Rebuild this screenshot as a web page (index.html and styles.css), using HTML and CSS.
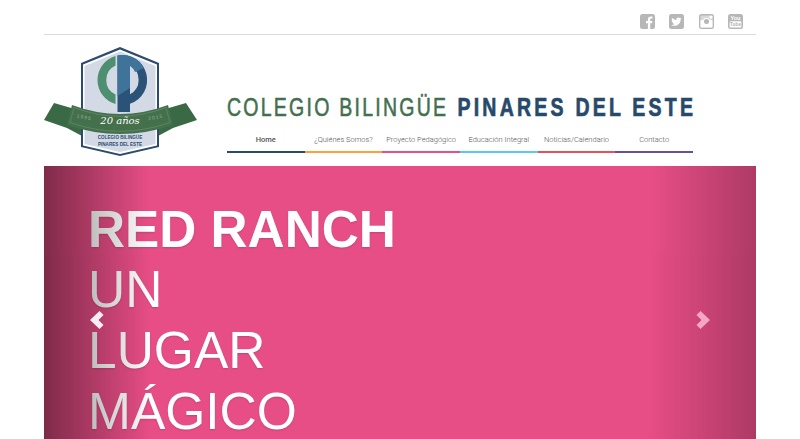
FILE: index.html
```html
<!DOCTYPE html>
<html lang="es">
<head>
    <meta charset="UTF-8">
    <meta name="viewport" content="width=device-width, initial-scale=1.0">
    <title>Colegio Bilingüe Pinares del Este</title>
    <link rel="stylesheet" href="styles.css">
</head>
<body>

    <div class="container">
        <div class="top-bar">
            <a href="#" class="social">
                <svg viewBox="0 0 15 15"><rect width="15" height="15" rx="2.5" fill="#b7b7b7"/><path d="M10.2 15V9.3h1.9l.3-2.2h-2.2V5.7c0-.7.2-1.1 1.1-1.1h1.2v-2c-.3 0-.9-.1-1.7-.1-1.7 0-2.9 1-2.9 3v1.6H6v2.2h1.9V15z" fill="#fff"/></svg>
            </a>
            <a href="#" class="social">
                <svg viewBox="0 0 15 15"><rect width="15" height="15" rx="2.5" fill="#b7b7b7"/><path transform="translate(2 2.2) scale(.46)" d="M23 4.9c-.8.4-1.7.6-2.6.7.9-.6 1.6-1.4 2-2.5-.9.5-1.8.9-2.9 1.1C18.7 3.3 17.5 2.8 16.2 2.8c-2.5 0-4.6 2-4.6 4.6 0 .4 0 .7.1 1C7.9 8.2 4.5 6.4 2.2 3.6c-.4.7-.6 1.5-.6 2.3 0 1.6.8 3 2 3.8-.8 0-1.5-.2-2.1-.6v.1c0 2.2 1.6 4.1 3.7 4.5-.4.1-.8.2-1.2.2-.3 0-.6 0-.9-.1.6 1.8 2.3 3.2 4.3 3.2-1.6 1.2-3.6 2-5.7 2-.4 0-.7 0-1.1-.1 2 1.3 4.5 2.1 7.1 2.1 8.5 0 13.1-7 13.1-13.1v-.6c.9-.7 1.7-1.5 2.3-2.4z" fill="#fff"/></svg>
            </a>
            <a href="#" class="social">
                <svg viewBox="0 0 15 15"><rect width="15" height="15" rx="2.5" fill="#b7b7b7"/><rect x="1.5" y="1.5" width="12" height="12" rx="1" fill="#d9d9d9"/><rect x="1.5" y="6.2" width="12" height="7.3" fill="#fff"/><rect x="10.6" y="1.8" width="2.8" height="2.8" rx=".5" fill="#fff"/><circle cx="7.5" cy="7.5" r="3.6" fill="#fff"/><circle cx="7.5" cy="7.5" r="2.5" fill="#b7b7b7"/></svg>
            </a>
            <a href="#" class="social">
                <svg viewBox="0 0 15 15"><rect width="15" height="15" rx="2.5" fill="#b7b7b7"/><rect x="1.6" y="7.2" width="11.8" height="6.4" rx="1.2" fill="#fff"/><text x="7.5" y="5.9" class="yt-top">You</text><text x="7.5" y="12.3" class="yt-bottom">Tube</text></svg>
            </a>
        </div>

        <header class="site-header">
            <a href="#" class="logo">
                <svg viewBox="44 44 156 116" width="156" height="116">
                    <path d="M44 120 L54 103 L85 112 L85 132 L82 136 L67 128 Z" fill="#3a6a45"/>
                    <path d="M197 120 L186 103 L155 112 L155 132 L158 136 L173 128 Z" fill="#3a6a45"/>
                    <path d="M120 47 L159 63 V147 L120 156 L81 147 V63 Z" fill="#2b4c6f"/>
                    <path d="M120 49.500 L157 64.500 V145.500 L120 154 L83 145.500 V64.500 Z" fill="#fff"/>
                    <path d="M120 51.500 L155.500 66 V144 L120 152 L84.500 144 V66 Z" fill="#d3dae6"/>
                    <path d="M115.500 56 A25 25 0 0 0 115.500 104 V94.500 A16 16 0 0 1 115.500 65.500 Z" fill="#4d8f70"/>
                    <path d="M117.500 55.400 A25 25 0 0 1 130 103.700 V112 H117.500 Z M130 65.800 V94.200 A16 16 0 0 0 130 65.800 Z" fill="#2b5277" fill-rule="evenodd"/>
                    <path d="M117.500 55.400 A25 25 0 0 1 144 68 L135 72 A16 16 0 0 0 130 65.800 V88 L117.500 96 Z" fill="#3f7399"/>
                    <path d="M72 105 Q120 123 168 105 L173 125 Q120 143 67 125 Z" fill="#44704c"/>
                    <path d="M74 107.500 Q120 125 166 107.500 L170 122.500 Q120 140 70 122.500 Z" fill="none" stroke="#6d9274" stroke-width=".6"/>
                    <text x="120" y="124" class="logo-years">20 años</text>
                    <text x="84" y="119" class="logo-date" transform="rotate(10 84 119)">1995</text>
                    <text x="156" y="119" class="logo-date" transform="rotate(-10 156 119)">2015</text>
                    <text x="120" y="139" class="logo-name">COLEGIO BILINGÜE</text>
                    <text x="120" y="146" class="logo-name">PINARES DEL ESTE</text>
                </svg>
            </a>
            <div class="header-right">
                <div class="site-title"><span class="title-green">COLEGIO BILINGÜE</span> <span class="title-blue">PINARES DEL ESTE</span></div>
                <nav class="main-nav">
                    <a href="#" class="nav-home">Home</a>
                    <a href="#" class="nav-orange">¿Quiénes Somos?</a>
                    <a href="#" class="nav-pink">Proyecto Pedagógico</a>
                    <a href="#" class="nav-sky">Educación Integral</a>
                    <a href="#" class="nav-red">Noticias/Calendario</a>
                    <a href="#" class="nav-purple">Contacto</a>
                </nav>
            </div>
        </header>

        <section class="carousel">
            <div class="slide-text">
                <h1>RED RANCH</h1>
                <p>UN</p>
                <p>LUGAR</p>
                <p>MÁGICO</p>
            </div>
            <a href="#" class="control control-left">
                <svg viewBox="0 0 14 18" width="14" height="18"><path d="M9.500 0 L13.500 4 L8.500 9 L13.500 14 L9.500 18 L0 9 Z" fill="#fff"/></svg>
            </a>
            <a href="#" class="control control-right">
                <svg viewBox="0 0 14 18" width="14" height="18"><path d="M4.500 0 L.5 4 L5.500 9 L.5 14 L4.500 18 L14 9 Z" fill="#fff"/></svg>
            </a>
        </section>
    </div>

</body>
</html>
```

FILE: styles.css
```css
body {
    font-family: 'Liberation Sans', Arial, sans-serif;
    background-color: #fff;
    margin: 0;
    padding: 0;
}

a {
    text-decoration: none;
}

.container {
    width: 712px;
    margin: 0 auto;
}

.top-bar {
    display: flex;
    justify-content: flex-end;
    gap: 14.5px;
    height: 35px;
    padding: 14px 13px 0 0;
    box-sizing: border-box;
    border-bottom: 1px solid #dcdcdc;
}

.social,
.social svg {
    display: block;
    width: 15px;
    height: 15px;
}

.yt-top,
.yt-bottom {
    font-family: 'Liberation Sans', sans-serif;
    font-weight: bold;
    text-anchor: middle;
}

.yt-top {
    font-size: 5.5px;
    fill: #fff;
}

.yt-bottom {
    font-size: 5px;
    fill: #b7b7b7;
}

.site-header {
    display: flex;
    height: 131px;
}

.logo {
    display: block;
    width: 183px;
    padding-top: 9px;
}

.logo svg {
    display: block;
}

.logo-years {
    font-family: 'DejaVu Serif', serif;
    font-style: italic;
    font-size: 10px;
    fill: #fff;
    text-anchor: middle;
}

.logo-date {
    font-family: 'Liberation Sans', sans-serif;
    font-size: 5px;
    letter-spacing: 1px;
    fill: #8fae96;
    text-anchor: middle;
}

.logo-name {
    font-family: 'Liberation Sans', sans-serif;
    font-weight: bold;
    font-size: 4.6px;
    fill: #2b4c6f;
    text-anchor: middle;
}

.header-right {
    width: 466px;
    padding-top: 57px;
}

.site-title {
    height: 30px;
    font-size: 26px;
    line-height: 30px;
    white-space: nowrap;
    transform: scaleX(0.75);
    transform-origin: left center;
}

.title-green {
    color: #42704f;
    letter-spacing: 3px;
    -webkit-text-stroke: 0.6px #42704f;
}

.title-blue {
    margin-left: 5px;
    font-weight: bold;
    letter-spacing: 4.3px;
    color: #284a6a;
    -webkit-text-stroke: 0.7px #284a6a;
}

.main-nav {
    display: grid;
    grid-template-columns: repeat(6, 1fr);
    margin-top: 9px;
}

.main-nav a {
    height: 17px;
    padding-top: 3px;
    border-bottom: 2px solid #ccc;
    font-family: Roboto, sans-serif;
    font-size: 7.5px;
    font-weight: 300;
    line-height: 12px;
    color: #555;
    text-align: center;
    white-space: nowrap;
}

.main-nav .nav-home {
    font-weight: 500;
    border-color: #2a4a6b;
}

.main-nav .nav-orange {
    border-color: #f5a33a;
}

.main-nav .nav-pink {
    border-color: #e94e8a;
}

.main-nav .nav-sky {
    border-color: #5cc8ee;
}

.main-nav .nav-red {
    border-color: #e8505b;
}

.main-nav .nav-purple {
    border-color: #6a4f96;
}

.carousel {
    position: relative;
    height: 308px;
    background-color: #e84e86;
}

.slide-text {
    padding: 34px 0 0 44px;
    color: #fff;
    text-shadow: 0 1px 2px rgba(0, 0, 0, 0.15);
}

.slide-text h1 {
    margin: 0 0 4px;
    font-size: 51.3px;
    font-weight: bold;
    line-height: 60px;
}

.slide-text p {
    margin: 0 0 11px;
    font-size: 51.5px;
    line-height: 50px;
}

.control {
    position: absolute;
    top: 0;
    bottom: 0;
    width: 15%;
    display: flex;
    align-items: center;
    justify-content: center;
}

.control-left {
    left: 0;
    opacity: 0.9;
    background-image: linear-gradient(to right, rgba(0, 0, 0, 0.5), rgba(0, 0, 0, 0.0001));
}

.control-right {
    right: 0;
    opacity: 0.5;
    background-image: linear-gradient(to right, rgba(0, 0, 0, 0.0001), rgba(0, 0, 0, 0.5));
}
```
